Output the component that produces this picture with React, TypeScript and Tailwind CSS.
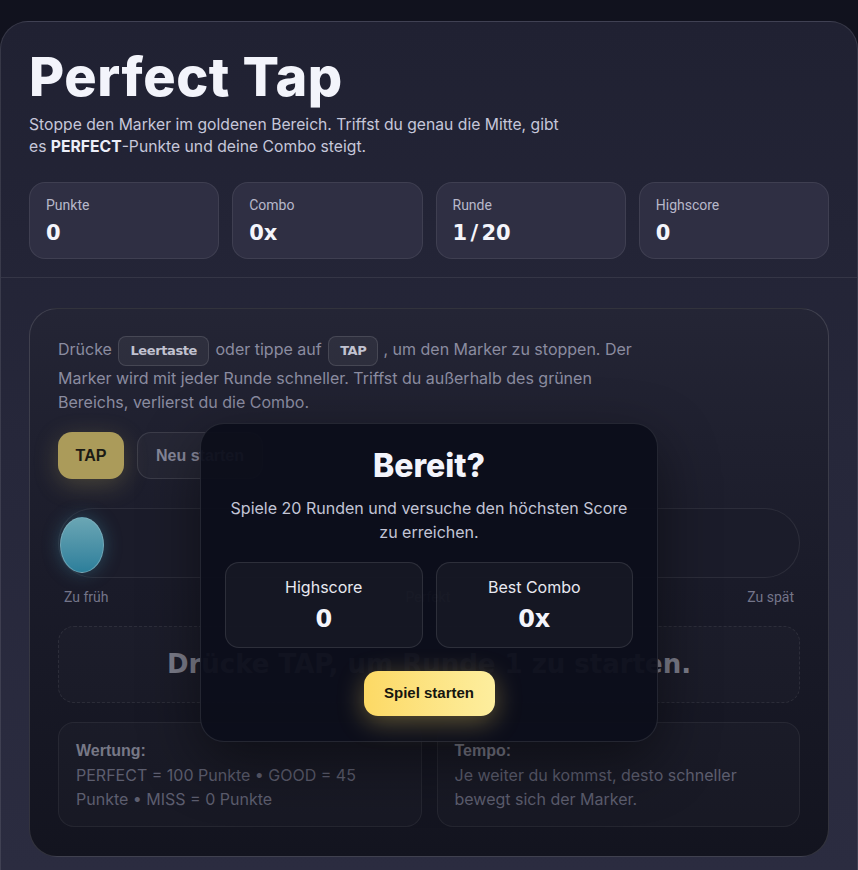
import React from "react";

function Stat({ label, value }: { label: string; value: string }) {
  return (
    <div className="h-[77px] rounded-[16px] border border-white/[0.08] bg-[#2f2f43] px-[16px] pt-[12px]">
      <div className="font-['Roboto',sans-serif] text-[14px] leading-[20px] text-[#b7b8ca]">{label}</div>
      <div className="mt-[4px] font-['DejaVu_Sans',sans-serif] text-[21px] font-bold leading-[28px] text-[#f4f5fb] [word-spacing:-4px]">{value}</div>
    </div>
  );
}

const kbd =
  "inline-block rounded-[8px] border border-white/[0.12] bg-white/[0.05] px-[11px] font-['DejaVu_Sans',sans-serif] text-[13px] font-bold leading-[28px] tracking-[-0.03em] text-[#c1c2d0]";

export default function App() {
  return (
    <div className="min-h-[870px] w-full bg-[#11121e] pt-[21px] font-['Inter',sans-serif]">
      <div className="relative overflow-hidden rounded-t-[28px] border border-white/[0.1] bg-gradient-to-b from-[#202132] via-[#26273a] to-[#2b2c40]">
        {/* Header */}
        <div className="border-b border-white/[0.08] px-[28px] pb-[18px] pt-[24px]">
          <h1 className="text-[54px] font-extrabold leading-[62px] tracking-[0.01em] text-[#f3f4fb]">Perfect Tap</h1>
          <p className="mt-[6px] max-w-[545px] text-[15.7px] leading-[22px] text-[#c6c7da]">
            Stoppe den Marker im goldenen Bereich. Triffst du genau die Mitte, gibt es <b className="font-bold text-[#eceef8]">PERFECT</b>-Punkte und deine Combo steigt.
          </p>
          <div className="mt-[24px] grid grid-cols-4 gap-[13px]">
            <Stat label="Punkte" value="0" />
            <Stat label="Combo" value="0x" />
            <Stat label="Runde" value="1 / 20" />
            <Stat label="Highscore" value="0" />
          </div>
        </div>

        {/* Main */}
        <div className="px-[28px] pb-[13px] pt-[30px]">
          <div className="relative overflow-hidden rounded-[28px] border border-white/[0.13] bg-gradient-to-b from-[#242535] via-[#1a1b29] to-[#13141f] px-[28px] pb-[29px] pt-[27px]">
            <p className="max-w-[590px] text-[16px] leading-[24px] text-[#8b8ca0]">
              Drücke <kbd className={`${kbd} ml-[2px] mr-[2px]`}>Leertaste</kbd> oder tippe auf{" "}
              <kbd className={`${kbd} ml-[2px] mr-[5px]`}>TAP</kbd>, um den Marker zu stoppen. Der Marker wird mit jeder Runde schneller. Triffst du außerhalb des grünen Bereichs, verlierst du die Combo.
            </p>

            <div className="mt-[18px] flex gap-[13px]">
              <button className="h-[47px] w-[66px] rounded-[14px] bg-[#ab9b5a] font-['Liberation_Sans',sans-serif] text-[16px] font-bold text-[#1b1a14] shadow-[0_6px_24px_rgba(200,180,90,0.25)]">TAP</button>
              <button className="h-[47px] rounded-[14px] border border-white/[0.1] bg-white/[0.03] px-[18px] font-['Liberation_Sans',sans-serif] text-[16px] font-bold text-[#86879a]">Neu starten</button>
            </div>

            <div className="relative mt-[29px] h-[70px] rounded-full border border-white/[0.08] bg-[#1b1c2a]">
              <div className="absolute left-[1px] top-[8px] h-[56px] w-[44px] rounded-[50%] border border-[#8ab8c4]/60 bg-gradient-to-b from-[#6aa6b4] to-[#2c7f9b] shadow-[0_0_18px_rgba(70,160,190,0.35)]" />
            </div>
            <div className="mt-[10px] flex justify-between px-[6px] font-['Roboto',sans-serif] text-[14px] leading-[18px] text-[#74758a]">
              <span>Zu früh</span>
              <span className="text-[#5a5b6c]">Perfekt</span>
              <span>Zu spät</span>
            </div>

            <div className="mt-[20px] flex h-[77px] items-center justify-center rounded-[16px] border border-dashed border-white/[0.08] bg-white/[0.015]">
              <span className="font-['DejaVu_Sans',sans-serif] text-[26px] font-bold text-[#7c7d8a]">Drücke TAP, um Runde 1 zu starten.</span>
            </div>

            <div className="mt-[19px] grid grid-cols-2 gap-[15px]">
              <div className="h-[105px] rounded-[16px] border border-white/[0.06] bg-white/[0.02] px-[17px] pt-[16px] text-[16px] leading-[24px] text-[#5d5e6f]">
                <div className="font-['Liberation_Sans',sans-serif] font-bold text-[#777886]">Wertung:</div>
                PERFECT = 100 Punkte • GOOD = 45 Punkte • MISS = 0 Punkte
              </div>
              <div className="h-[105px] rounded-[16px] border border-white/[0.06] bg-white/[0.02] px-[17px] pt-[16px] text-[16px] leading-[24px] text-[#5d5e6f]">
                <div className="font-['Liberation_Sans',sans-serif] font-bold text-[#777886]">Tempo:</div>
                Je weiter du kommst, desto schneller bewegt sich der Marker.
              </div>
            </div>

            {/* Modal overlay */}
            <div className="absolute inset-0 flex items-center justify-center">
              <div className="w-[458px] rounded-[24px] border border-white/[0.1] bg-[#0c0e1a]/[0.95] px-[24px] pb-[25px] pt-[22px] text-center shadow-[0_20px_60px_rgba(0,0,0,0.45)]">
                <h2 className="text-[32px] font-extrabold leading-[40px] text-[#f3f4fb]">Bereit?</h2>
                <p className="mx-auto mt-[10px] max-w-[410px] text-[16px] leading-[24px] text-[#c3c5d6]">
                  Spiele 20 Runden und versuche den höchsten Score zu erreichen.
                </p>
                <div className="mt-[18px] grid grid-cols-2 gap-[13px]">
                  <div className="h-[86px] rounded-[14px] border border-white/[0.1] bg-white/[0.04] pt-[13px]">
                    <div className="text-[16px] leading-[22px] text-[#e8e9f1]">Highscore</div>
                    <div className="mt-[7px] font-['DejaVu_Sans',sans-serif] text-[24px] font-bold leading-[28px] text-[#f4f5fb]">0</div>
                  </div>
                  <div className="h-[86px] rounded-[14px] border border-white/[0.1] bg-white/[0.04] pt-[13px]">
                    <div className="text-[16px] leading-[22px] text-[#e8e9f1]">Best Combo</div>
                    <div className="mt-[7px] font-['DejaVu_Sans',sans-serif] text-[24px] font-bold leading-[28px] text-[#f4f5fb]">0x</div>
                  </div>
                </div>
                <button className="mt-[23px] h-[45px] w-[131px] rounded-[14px] bg-gradient-to-r from-[#fcd964] to-[#fdee9e] font-['Liberation_Sans',sans-serif] text-[15px] font-bold text-[#16150f] shadow-[0_6px_26px_rgba(252,217,100,0.35)]">Spiel starten</button>
              </div>
            </div>
          </div>
        </div>
      </div>
    </div>
  );
}
